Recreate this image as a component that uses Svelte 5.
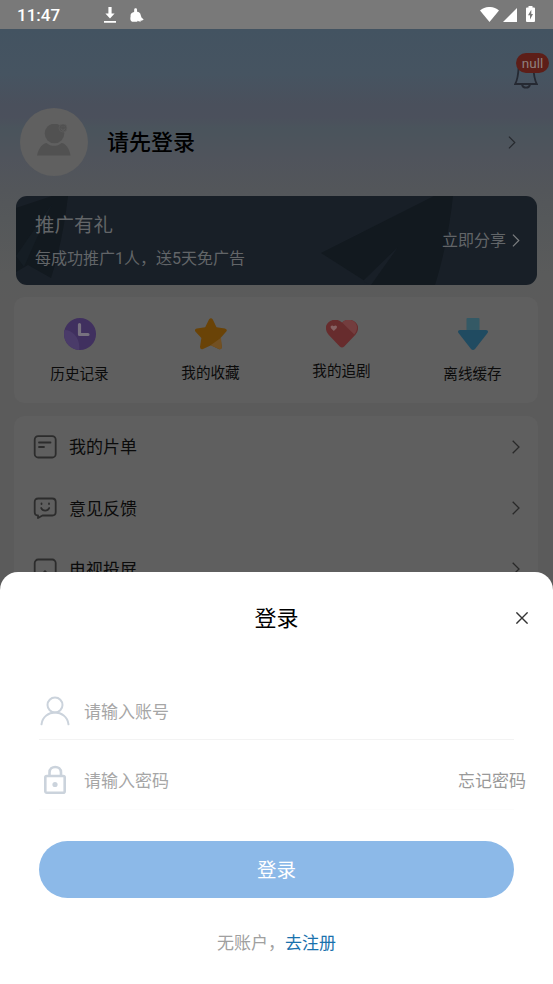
<script lang="ts">
	let account = $state('');
	let password = $state('');

	const shortcuts = [
		{ id: 'history', label: '历史记录' },
		{ id: 'favorite', label: '我的收藏' },
		{ id: 'follow', label: '我的追剧' },
		{ id: 'offline', label: '离线缓存' }
	];

	const menu = [
		{ id: 'list', label: '我的片单' },
		{ id: 'feedback', label: '意见反馈' },
		{ id: 'cast', label: '电视投屏' }
	];
</script>

{#snippet chevron(cls: string)}
	<svg class="chevron {cls}" viewBox="0 0 8 14" fill="none" stroke="currentColor" stroke-width="1.3" aria-hidden="true">
		<path d="M.7.7 7 7 .7 13.3" />
	</svg>
{/snippet}

<div class="screen">
	<header class="status-bar">
		<span class="clock">11:47</span>
		<svg class="download-icon" viewBox="0 0 12 16" fill="#fff" aria-hidden="true">
			<path d="M4.4 0h3.2v6.4h3L6 11.6 1.4 6.4h3zM0 14h12v1.8H0z" />
		</svg>
		<svg class="cleaner-icon" viewBox="0 0 14 14" fill="#fff" aria-hidden="true">
			<path d="M4.2 1.5C4.2-.2 7-.2 7 1.5L7.1 3.8C9 4 10.4 5 10.6 6.800L11.500 9.500 13.700 11.600C12.700 12.700 11.500 12.800 10.600 12.500L10.700 13.700 8.500 13.200 7.600 12.700 7.300 13.700H2.200C.4 13.300 0 11 .6 8.500.2 6 1.600 4.300 4.100 3.900z" />
		</svg>
		<div class="system">
			<svg class="wifi-icon" viewBox="0 0 19 15" fill="#fff" aria-hidden="true">
				<path d="M0 3.5C5.500-1.200 13.500-1.200 19 3.500L9.500 15z" />
			</svg>
			<svg class="signal-icon" viewBox="0 0 14 14" fill="#fff" aria-hidden="true">
				<path d="M14 0v14H0z" />
			</svg>
			<svg class="battery-icon" viewBox="0 0 9 16" aria-hidden="true">
				<path fill="#fff" d="M2.500 0h4v1.500H8q1 0 1 1V15q0 1-1 1H1q-1 0-1-1V2.500q0-1 1-1h1.500z" />
				<path fill="#777" d="M5.300 3.800 2 9.300h2v4.200l3-5.600H5.300z" />
			</svg>
		</div>
	</header>

	<main class="page">
		<div class="notice-row">
			<div class="bell">
				<svg viewBox="0 0 24 26" fill="none" stroke="#252932" stroke-width="1.8" aria-hidden="true">
					<path d="M4.600 4c-.3 7-.8 12.500-3.400 17h21.600C20.200 16.500 19.700 11 19.400 4M8 21.500c.8 4.200 7.200 4.200 8 0" />
				</svg>
				<span class="badge">null</span>
			</div>
		</div>

		<section class="profile">
			<div class="avatar">
				<svg viewBox="0 0 34 32" fill="#515151" aria-hidden="true">
					<circle cx="17.5" cy="9.5" r="9.8" />
					<path d="M0 31.500C2 23 6 19.500 9.500 19c4.500 3.800 10.500 3.800 15 0 4 .5 8 5 9 12.500z" />
					<circle cx="26" cy="4" r="4" stroke="#5c5c5c" stroke-width=".8" />
					<path d="M24 4.500c.6 2.200 3.400 2.200 4 0M24.700 2.700h.6M26.800 2.700h.6" fill="none" stroke="#606060" />
				</svg>
			</div>
			<h1>请先登录</h1>
			{@render chevron('profile-chevron')}
		</section>

		<section class="promo">
			<svg class="planes" viewBox="0 0 521 89" aria-hidden="true">
				<g fill="#12191f">
					<path d="M0 12 36 0h16c-3 26-8 54-17 82L12 69 0 76z" />
					<path d="M305 57 418 0h19c-3 28-8 56-18 89h-64l27-38-30 36z" />
				</g>
				<path d="M0 60 36 8 8 71z" fill="#151d24" />
				<path d="m347 85 35-34-28 38z" fill="#181f27" />
			</svg>
			<div class="promo-text">
				<h2>推广有礼</h2>
				<p>每成功推广1人，送5天免广告</p>
			</div>
			<span class="share">立即分享</span>
			{@render chevron('promo-chevron')}
		</section>

		<section class="shortcuts">
			{#each shortcuts as item (item.id)}
				<div class="shortcut {item.id}">
					{#if item.id === 'history'}
						<svg viewBox="0 0 32 32" aria-hidden="true">
							<circle cx="16" cy="16" r="16" fill="#40305f" />
							<path d="M0 16a16 16 0 0 1 .5-4C9 12 17 21 15 32A16 16 0 0 1 0 16z" fill="#4a3b69" />
							<path d="M15.500 6.500v10h8.500" fill="none" stroke="#77717f" stroke-width="3.200" stroke-linecap="round" stroke-linejoin="round" />
						</svg>
					{:else if item.id === 'favorite'}
						<svg viewBox="0 0 32 32" aria-hidden="true">
							<path d="M14 1.500q2-2.500 3.800 0l3.700 7.800 8.300 1.200q3.200.8 1.300 3.300l-5.600 6.300 1.300 9q-.2 2.900-3 2L16 27.200l-8 3.900q-2.800.8-3-2l1.400-9L.6 13.800q-1.700-2.500 1.300-3.300l8.300-1.200z" fill="#6a4307" />
							<path d="M15.500 27.300 26 19.800l.8 9.300q-.2 2.900-3 2z" fill="#725022" />
						</svg>
					{:else if item.id === 'follow'}
						<svg viewBox="0 0 32 28" aria-hidden="true">
							<path d="M13.800 26.500 2.600 14.800C-6 4 8-5 16 2.400 24-5 38 4 29.400 14.800L18.200 26.500q-2.200 2-4.400 0z" fill="#672c2d" />
							<path d="M16 2.400C24-5 36.500 4 28.300 14.500z" fill="#733d3e" />
							<path d="M7.800 11 5 8.200C3.600 6 6.200 4.700 7.800 6.200 9.400 4.700 12 6 10.600 8.200z" fill="#856263" />
						</svg>
					{:else}
						<svg viewBox="0 0 30 32" aria-hidden="true">
							<path d="M8.500 1q0-1 1-1h11q1 0 1 1v12h-13z" fill="#345965" />
							<path d="M2 12h26q3 .5 1.500 3L17 31q-2 2-4 0L.5 15q-1.500-2.500 1.500-3z" fill="#204b61" />
						</svg>
					{/if}
					<span>{item.label}</span>
				</div>
			{/each}
		</section>

		<section class="menu">
			{#each menu as item (item.id)}
				<div class="menu-row">
					<svg class="menu-icon" viewBox="0 0 24 24" fill="none" stroke="#2c2c2c" stroke-width="1.8" stroke-linecap="round" stroke-linejoin="round" aria-hidden="true">
						{#if item.id === 'list'}
							<rect x="1.7" y="1.2" width="21" height="21.3" rx="3.5" />
							<path d="M6 7.500h11.500M6 12h5" />
						{:else if item.id === 'feedback'}
							<path d="M5.200 2.500h14q3.500 0 3.500 3.500v10q0 3.500-3.500 3.500H9.500L5 22v-2.500q-3.300 0-3.300-3.500V6q0-3.500 3.500-3.500z" />
							<path d="M8.500 7.500v.5M16 7.500v.5M8.200 12c1.500 3.500 6.500 3.500 8 0" />
						{:else}
							<rect x="1.7" y="2.5" width="21" height="18" rx="3.5" />
							<path d="m12 14.200 3 3.300H9z" fill="#2c2c2c" />
						{/if}
					</svg>
					<span>{item.label}</span>
					{@render chevron('menu-chevron')}
				</div>
			{/each}
		</section>
	</main>

	<!-- Login sheet -->
	<section class="sheet">
		<div class="sheet-header">
			<h2>登录</h2>
			<button class="close" aria-label="关闭">
				<svg viewBox="0 0 12 12" fill="none" stroke="#333" stroke-width="1.4" aria-hidden="true">
					<path d="m.4.4 11.200 11.200M11.600.4.4 11.600" />
				</svg>
			</button>
		</div>

		<label class="field">
			<svg viewBox="0 0 30 30" fill="none" stroke="#cbd3dc" stroke-width="2" stroke-linecap="round" aria-hidden="true">
				<circle cx="15" cy="9" r="7.5" />
				<path d="M1.500 28.300C3.500 12.700 26.500 12.700 28.500 28.300" />
			</svg>
			<input type="text" placeholder="请输入账号" bind:value={account} />
		</label>

		<div class="field password">
			<svg viewBox="0 0 30 30" fill="none" stroke="#cbd3dc" stroke-width="2.6" aria-hidden="true">
				<rect x="5.300" y="11" width="19.400" height="16.800" rx="1.500" />
				<path d="M9.500 11V7.500c0-7.400 11.500-7.400 11.500 0V11" />
				<circle cx="15" cy="19.500" r="2.600" fill="#cbd3dc" stroke="none" />
			</svg>
			<input type="password" placeholder="请输入密码" bind:value={password} />
			<span class="forgot">忘记密码</span>
		</div>

		<button class="submit">登录</button>
		<p class="register">无账户，<span>去注册</span></p>
	</section>
</div>

<style>
	:global(body) {
		margin: 0;
	}
	.screen {
		position: relative;
		display: flex;
		flex-direction: column;
		width: 553px;
		height: 984px;
		overflow: hidden;
		background: #5b5b5b;
		font-family: Roboto, 'Noto Sans CJK SC', sans-serif;
		color: #0b0b0b;
	}
	h1,
	h2,
	p {
		margin: 0;
		font-weight: 400;
	}
	svg {
		display: block;
		flex-shrink: 0;
	}

	/* Status bar */
	.status-bar {
		display: flex;
		flex-shrink: 0;
		align-items: center;
		box-sizing: border-box;
		height: 29px;
		padding: 1px 18px 0 17px;
		background: #797979;
	}
	.clock {
		width: 87px;
		font-size: 17px;
		font-weight: 500;
		line-height: 28px;
		color: #fff;
	}
	.download-icon {
		width: 12px;
		height: 16px;
	}
	.cleaner-icon {
		width: 14px;
		height: 14px;
		margin-left: 14px;
	}
	.system {
		display: flex;
		align-items: center;
		margin-left: auto;
	}
	.wifi-icon {
		width: 19px;
		height: 15px;
		margin-top: -1px;
	}
	.signal-icon {
		width: 14px;
		height: 14px;
		margin: 0 9px 0 4px;
	}
	.battery-icon {
		width: 9px;
		height: 16px;
		margin-top: -2px;
	}

	/* Page */
	.page {
		display: flex;
		flex: 1;
		flex-direction: column;
		min-height: 0;
		background: linear-gradient(#435361 0, #465461 45px, #4a505c 75px, #4b505c 88px, #4a545c 100px, #50545c 130px, #53565a 160px, #55585a 190px, #5a5b5b 245px, #5b5b5b 275px);
	}
	.notice-row {
		display: flex;
		justify-content: flex-end;
		height: 79px;
		padding: 34px 15px 0 0;
		box-sizing: border-box;
	}
	.bell {
		position: relative;
		width: 24px;
		height: 26px;
	}
	.badge {
		position: absolute;
		top: -10px;
		left: 2px;
		width: 33px;
		height: 20px;
		border-radius: 10px;
		background: #5d1e18;
		font-size: 13.5px;
		line-height: 20px;
		text-align: center;
		color: #8e807f;
	}
	.profile {
		display: flex;
		align-items: center;
		height: 68px;
		padding: 0 37px 0 20px;
	}
	.avatar {
		display: flex;
		align-items: center;
		justify-content: center;
		width: 68px;
		height: 68px;
		border-radius: 50%;
		background: #606060;
	}
	.avatar svg {
		width: 34px;
		height: 32px;
		margin-top: -4px;
	}
	.profile h1 {
		margin-left: 19px;
		padding-top: 2px;
		font-size: 22px;
		font-weight: 500;
		line-height: 32px;
		color: #000;
	}
	.chevron {
		width: 8px;
		height: 14px;
		margin-left: auto;
		color: #292929;
	}
	.profile-chevron {
		height: 13px;
		color: #26292e;
	}

	/* Promo banner */
	.promo {
		position: relative;
		display: flex;
		flex-shrink: 0;
		align-items: center;
		box-sizing: border-box;
		height: 89px;
		margin: 20px 16px 0;
		padding: 0 17px 0 19px;
		border-radius: 11px;
		overflow: hidden;
		background: #181f27;
		color: #626568;
	}
	.planes {
		position: absolute;
		inset: 0;
		width: 521px;
		height: 89px;
	}
	.promo-text {
		position: relative;
		padding-top: 4px;
	}
	.promo h2 {
		font-size: 19.5px;
		line-height: 32px;
	}
	.promo p {
		padding-top: 1px;
		font-size: 16px;
		line-height: 32px;
	}
	.share {
		position: relative;
		margin-left: auto;
		font-size: 16px;
		line-height: 24px;
	}
	.promo-chevron {
		position: relative;
		height: 13px;
		margin: -1px 0 0 6px;
		color: #7c7e80;
	}

	/* Shortcuts */
	.shortcuts {
		display: grid;
		flex-shrink: 0;
		grid-template-columns: repeat(4, 1fr);
		height: 106px;
		margin: 12px 15px 0 14px;
		border-radius: 10px;
		background: #5f5f5f;
	}
	.shortcut {
		display: flex;
		flex-direction: column;
		align-items: center;
		padding-top: 21px;
		font-size: 14.6px;
		line-height: 22px;
	}
	.shortcut svg {
		width: 32px;
		height: 32px;
		margin-bottom: 13px;
	}
	.shortcut.favorite svg {
		margin-bottom: 12px;
	}
	.shortcut.follow svg {
		height: 28px;
		margin: 2px 0 12px;
	}
	.shortcut.offline svg {
		width: 30px;
	}

	/* Menu */
	.menu {
		flex: 1;
		margin: 13px 15px 0 14px;
		border-radius: 10px 10px 0 0;
		background: #5f5f5f;
	}
	.menu-row {
		display: flex;
		align-items: center;
		height: 61.4px;
		padding: 0 18px 0 19px;
		font-size: 17px;
		line-height: 26px;
	}
	.menu-icon {
		width: 24px;
		height: 24px;
	}
	.menu-row span {
		margin-left: 12px;
		padding-top: 1px;
	}

	/* Login sheet */
	.sheet {
		position: absolute;
		inset: 572px 0 0;
		display: flex;
		flex-direction: column;
		box-sizing: border-box;
		padding: 0 39px;
		border-radius: 18px 18px 0 0;
		background: #fff;
	}
	.sheet-header {
		display: flex;
		align-items: center;
		justify-content: center;
		height: 92px;
		margin: 0 -39px;
	}
	.sheet-header h2 {
		margin-left: auto;
		padding: 2px 0 0 37px;
		font-size: 22px;
		line-height: 32px;
		color: #000;
	}
	.close {
		display: flex;
		margin: 0 25px 0 auto;
		padding: 0;
		border: 0;
		background: none;
	}
	.close svg {
		width: 12px;
		height: 12px;
	}
	.field {
		display: flex;
		align-items: center;
		box-sizing: border-box;
		height: 58px;
		margin-top: 18px;
		border-bottom: 1px solid #f3f3f3;
	}
	.field svg {
		width: 30px;
		height: 30px;
		margin-left: 1px;
	}
	.field input {
		flex: 1;
		min-width: 0;
		margin-left: 14px;
		padding: 2px 0 0;
		border: 0;
		outline: 0;
		background: none;
		font: 17px/26px Roboto, 'Noto Sans CJK SC', sans-serif;
		color: #222;
	}
	.field input::placeholder {
		color: #a6a6a6;
		opacity: 1;
	}
	.field.password {
		height: 70px;
		margin-top: 0;
		padding-top: 11px;
		border-bottom-color: #fcfcfc;
	}
	.forgot {
		margin-right: -12px;
		padding-top: 2px;
		font-size: 17px;
		line-height: 26px;
		color: #999;
	}
	.submit {
		height: 57px;
		margin-top: 31px;
		padding: 2px 0 0;
		border: 0;
		border-radius: 29px;
		background: #8cb9e8;
		font: 19.5px/30px Roboto, 'Noto Sans CJK SC', sans-serif;
		color: #fff;
	}
	.register {
		margin-top: 32px;
		font-size: 17px;
		line-height: 26px;
		text-align: center;
		color: #a0a0a0;
	}
	.register span {
		color: #1971ad;
	}
</style>
